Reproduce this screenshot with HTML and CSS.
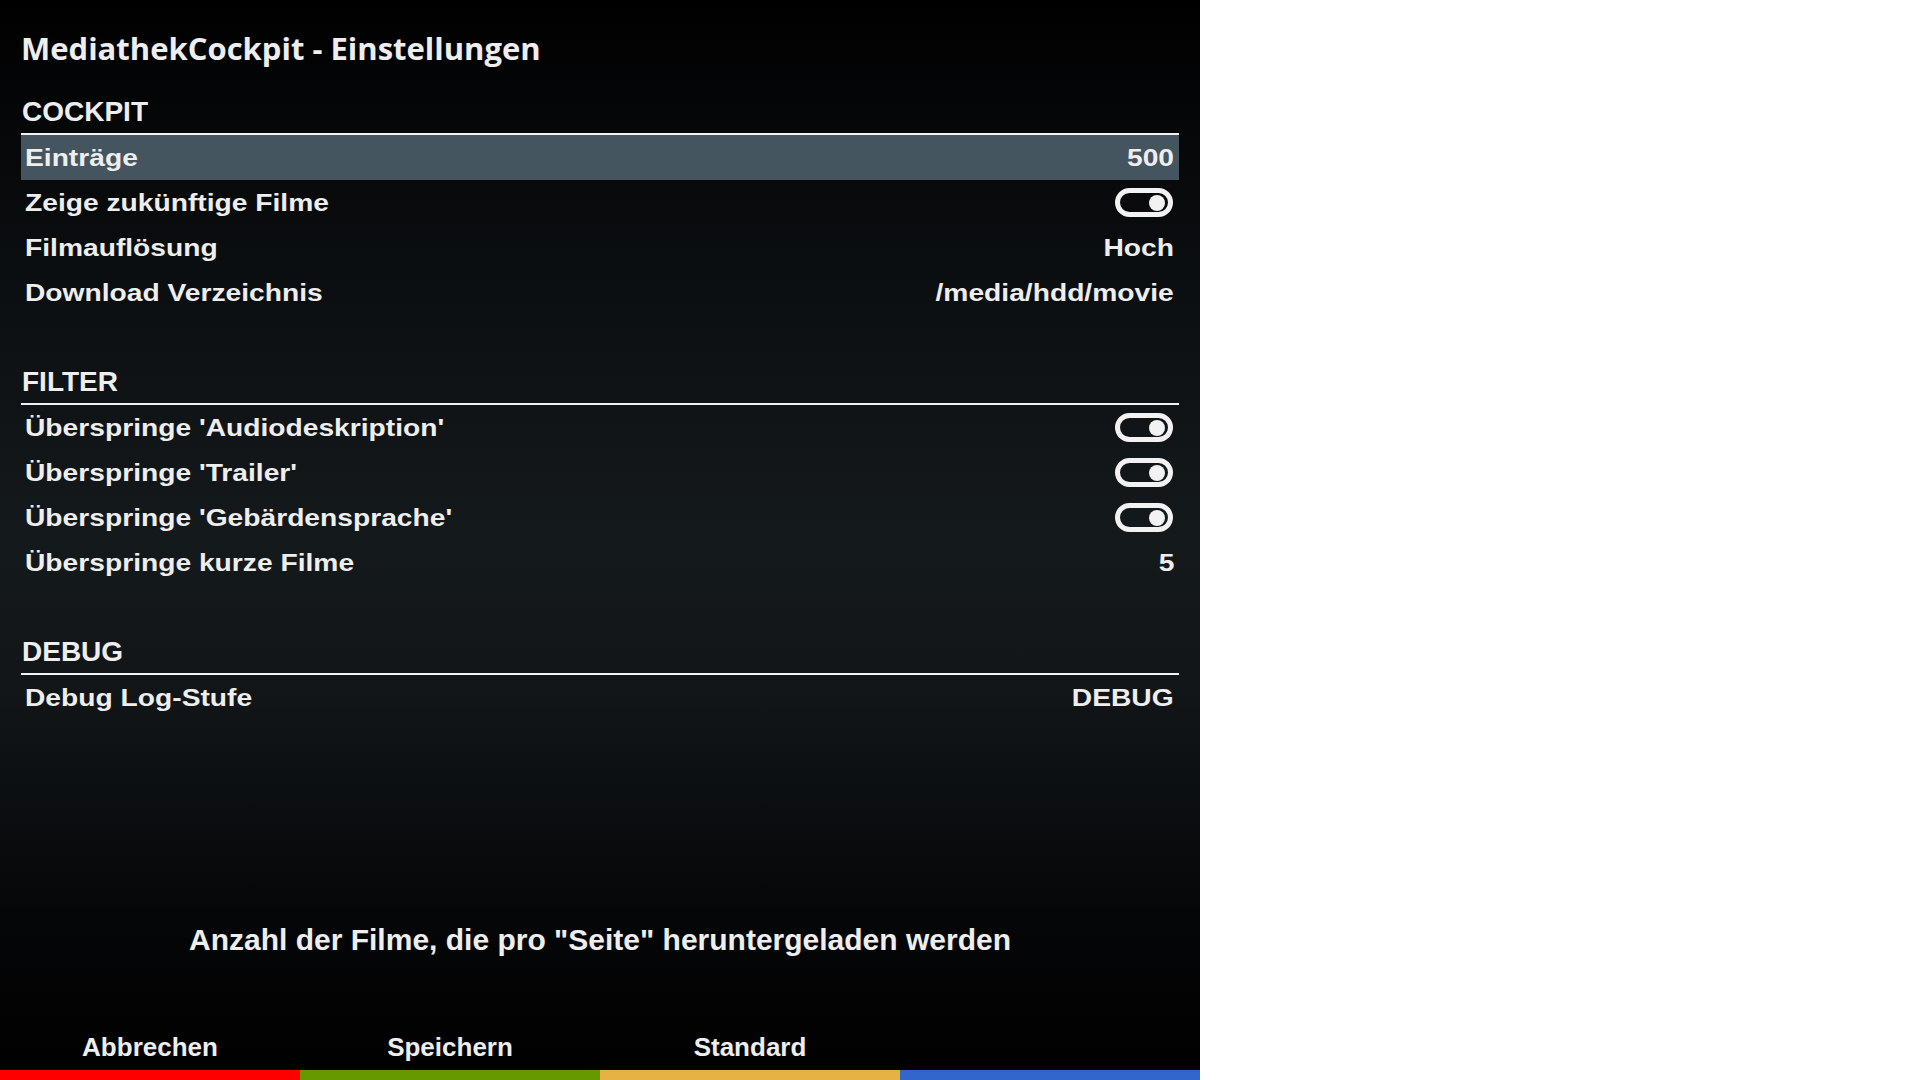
FILE: index.html
```html
<!DOCTYPE html>
<html lang="de">
<head>
<meta charset="utf-8">
<title>MediathekCockpit - Einstellungen</title>
<link rel="stylesheet" href="styles.css">
</head>
<body>
<div class="screen">
  <div class="panel">
    <h1 class="title">MediathekCockpit - Einstellungen</h1>
    <div class="list">
      <div class="section-head">COCKPIT</div>
      <div class="row selected"><span class="label">Einträge</span><span class="value">500</span></div>
      <div class="row"><span class="label">Zeige zukünftige Filme</span><span class="toggle"><span class="knob"></span></span></div>
      <div class="row"><span class="label">Filmauflösung</span><span class="value">Hoch</span></div>
      <div class="row"><span class="label">Download Verzeichnis</span><span class="value">/media/hdd/movie</span></div>
      <div class="spacer"></div>
      <div class="section-head">FILTER</div>
      <div class="row"><span class="label">Überspringe 'Audiodeskription'</span><span class="toggle"><span class="knob"></span></span></div>
      <div class="row"><span class="label">Überspringe 'Trailer'</span><span class="toggle"><span class="knob"></span></span></div>
      <div class="row"><span class="label">Überspringe 'Gebärdensprache'</span><span class="toggle"><span class="knob"></span></span></div>
      <div class="row"><span class="label">Überspringe kurze Filme</span><span class="value">5</span></div>
      <div class="spacer"></div>
      <div class="section-head">DEBUG</div>
      <div class="row"><span class="label">Debug Log-Stufe</span><span class="value">DEBUG</span></div>
    </div>
    <div class="desc">Anzahl der Filme, die pro "Seite" heruntergeladen werden</div>
    <div class="buttons">
      <div class="btn"><span class="btn-label">Abbrechen</span><span class="bar red"></span></div>
      <div class="btn"><span class="btn-label">Speichern</span><span class="bar green"></span></div>
      <div class="btn"><span class="btn-label">Standard</span><span class="bar yellow"></span></div>
      <div class="btn"><span class="btn-label"></span><span class="bar blue"></span></div>
    </div>
  </div>
  <div class="rest"></div>
</div>
</body>
</html>
```
FILE: styles.css
```css
html, body {
  margin: 0;
  padding: 0;
  width: 1920px;
  height: 1080px;
  overflow: hidden;
  background: #ffffff;
}

.screen {
  display: flex;
  width: 1920px;
  height: 1080px;
}

.panel {
  width: 1200px;
  height: 1080px;
  display: flex;
  flex-direction: column;
  background: linear-gradient(to bottom, #000000 0%, #0b0e10 25%, #14191c 50%, #111518 65%, #050607 85%, #000000 100%);
  color: #eeeeee;
  font-family: "Liberation Sans", Arial, sans-serif;
  font-weight: bold;
}

.rest {
  flex: 1;
  background: #ffffff;
}

.title {
  margin: 0;
  height: 90px;
  box-sizing: border-box;
  padding: 28px 0 0 21px;
  font-family: "Open Sans", sans-serif;
  font-weight: 700;
  font-size: 31px;
  line-height: 40px;
  color: #eeeeee;
}

.list {
  margin: 0 21px;
  display: flex;
  flex-direction: column;
}

.section-head {
  height: 45px;
  box-sizing: border-box;
  border-bottom: 2px solid #f2f2f2;
  padding: 5px 0 0 1px;
  font-size: 28px;
  line-height: 34px;
}

.spacer {
  height: 45px;
}

.row {
  height: 45px;
  display: flex;
  align-items: center;
  justify-content: space-between;
  padding: 1px 5px 0 4px;
  box-sizing: border-box;
  font-size: 24px;
}

.row.selected {
  background: #445560;
}

.label, .value {
  display: inline-block;
  transform: scaleX(1.175);
  white-space: nowrap;
}

.label {
  transform-origin: left center;
}

.value {
  transform-origin: right center;
}

.toggle {
  width: 58px;
  height: 29px;
  box-sizing: border-box;
  border: 5px solid #f2f2f2;
  border-radius: 15px;
  display: flex;
  align-items: center;
  justify-content: flex-end;
  padding-right: 3px;
  margin-right: 1px;
  margin-top: -1px;
}

.knob {
  width: 16px;
  height: 16px;
  border-radius: 50%;
  background: #f2f2f2;
}

.desc {
  margin-top: 203px;
  text-align: center;
  font-size: 30px;
  line-height: 34px;
}

.buttons {
  margin-top: auto;
  display: flex;
}

.btn {
  width: 300px;
  display: flex;
  flex-direction: column;
  align-items: center;
}

.btn-label {
  font-size: 26px;
  line-height: 30px;
  height: 30px;
  margin-bottom: 8px;
}

.bar {
  align-self: stretch;
  height: 10px;
}

.red { background: #ff0000; }
.green { background: #669900; }
.yellow { background: #e5b243; }
.blue { background: #3366cc; }
```
